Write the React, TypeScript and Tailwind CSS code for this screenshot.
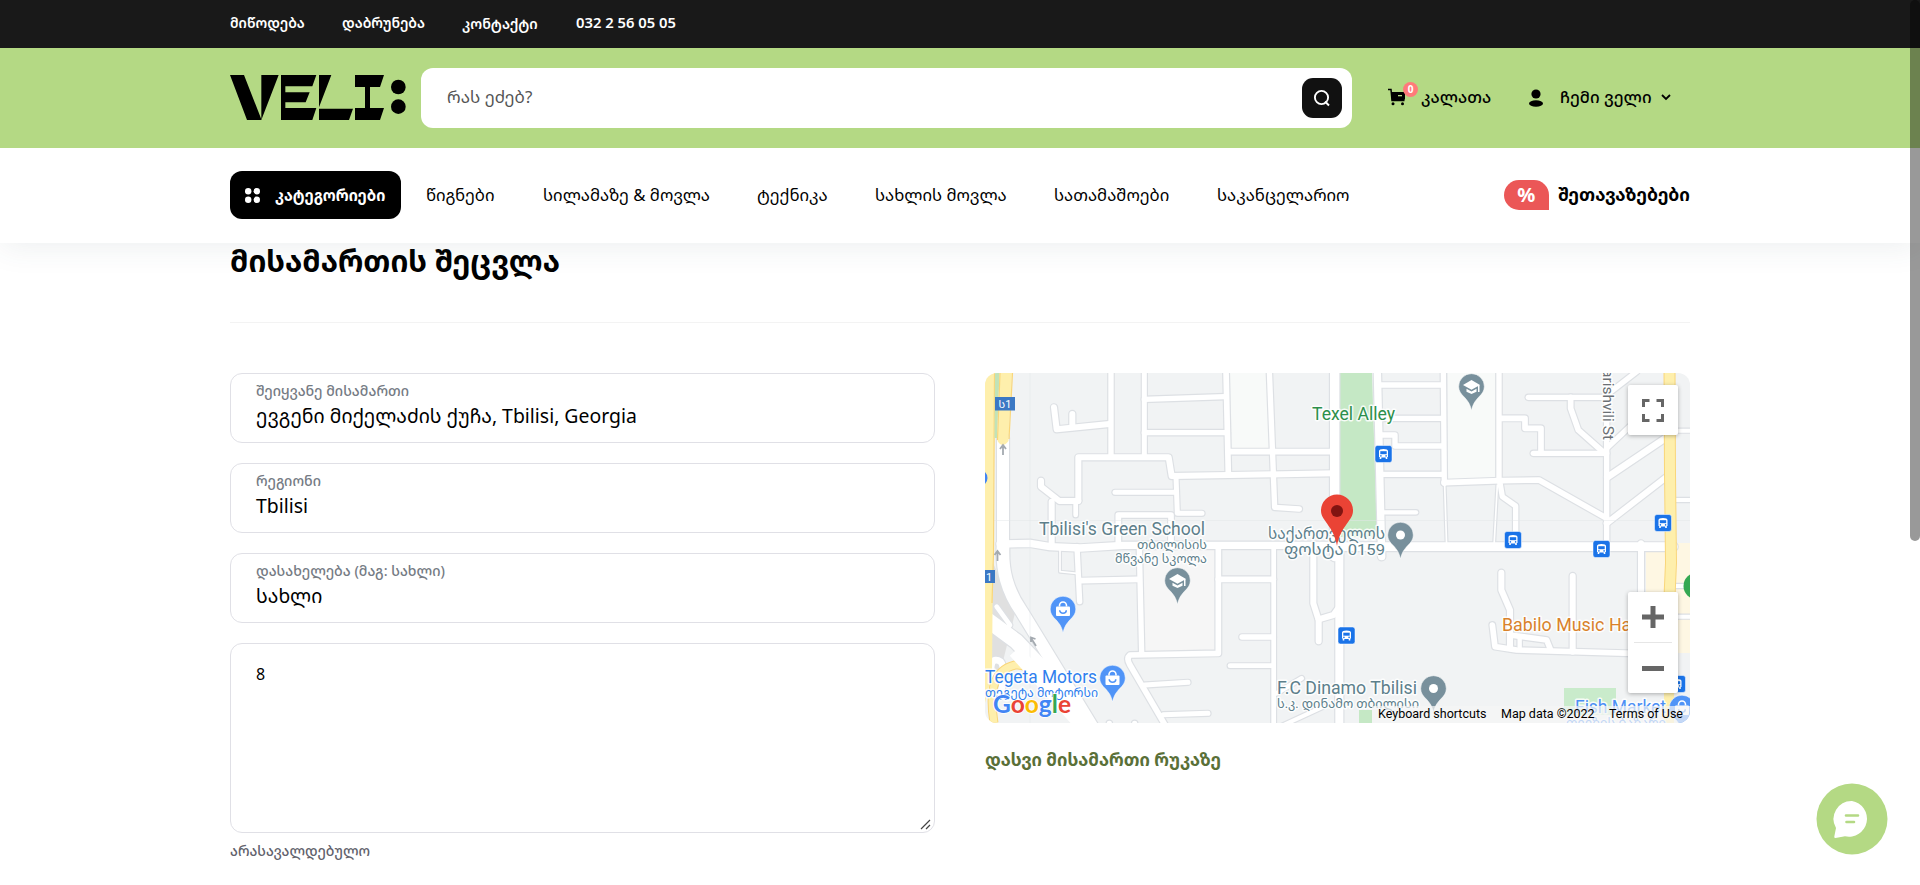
import React from "react";

type Road = [d: string, width: number];
type Quad = { t: string; roads: Road[] };

const QUADS: Quad[] = [
  {
    t: "translate(-5 -3) scale(.33333)",
    roads: [
      ["M69 205V560", 36],
      ["M222 112L230 178L388 162", 18],
      ["M277 132V172", 18],
      ["M393 0V258", 16],
      ["M493 0V258", 15],
      ["M493 88L735 80", 16],
      ["M493 188H742", 16],
      ["M738 0L745 312", 17],
      ["M868 0L884 412L958 417", 16],
      ["M745 245H1064", 17],
      ["M295 392V262H566L575 318L1064 310", 18],
      ["M405 367H588", 15],
      ["M588 320L592 430H666", 15],
      ["M183 332V350L238 393H295", 18],
      ["M215 395V525", 18],
      ["M287 395V435", 14],
      ["M415 520V435H573V520", 17],
      ["M60 522L150 520L210 530L300 534L430 526H1080", 22],
      ["M1064 0V560", 28],
    ],
  },
  {
    t: "translate(355 -3) scale(.33333)",
    roads: [
      ["M112 0L125 560", 22],
      ["M120 45H308", 16],
      ["M122 145H308", 16],
      ["M122 195H165V228H308", 16],
      ["M122 313H308", 16],
      ["M130 427H228", 13],
      ["M310 0L313 340", 16],
      ["M312 338L480 332L597 330L800 445", 17],
      ["M477 0V334", 16],
      ["M480 145H555V175H603V245", 17],
      ["M580 250H800", 16],
      ["M565 82H800", 16],
      ["M692 82V115L715 180L785 242", 17],
      ["M800 0V535", 16],
      ["M800 75L890 5", 16],
      ["M800 235L890 150", 16],
      ["M802 322L978 203", 20],
      ["M800 460L978 322", 18],
      ["M480 338L487 380L527 408V520", 16],
      ["M314 345L320 530", 5],
      ["M472 345L462 530", 5],
      ["M990 182H1060", 12],
      ["M990 390H1060", 12],
      ["M-20 530H1000", 26],
    ],
  },
  {
    t: "translate(-5 177) scale(.33333)",
    roads: [
      ["M69 -10C66 60 80 120 125 185L345 545", 38],
      ["M22 210L110 275L200 370L330 540", 46],
      ["M50 170L90 225L70 250", 14],
      ["M45 400C20 340 40 320 62 335C75 350 70 400 60 440", 20],
      ["M291 -10L299 155", 16],
      ["M240 0V65L290 70", 5],
      ["M300 92L475 88", 17],
      ["M478 -10L485 308", 16],
      ["M715 -10V310L450 315Q438 325 450 345L558 530", 17],
      ["M715 88H880", 17],
      ["M881 -10V540", 14],
      ["M786 261H880", 16],
      ["M750 347H880", 14],
      ["M495 405L624 397", 15],
      ["M550 494L684 490", 15],
      ["M1000 -10V160L1016 210V274", 18],
      ["M1016 208L1060 195L1078 170", 18],
      ["M1078 -10V540", 24],
      ["M965 385L890 430", 14],
      ["M1030 470L900 530", 12],
      ["M388 520V560M464 520V560", 16],
    ],
  },
  {
    t: "translate(355 177) scale(.33333)",
    roads: [
      ["M903 -20V310", 18],
      ["M484 68V120L510 180V295", 18],
      ["M457 225L465 290L530 300L910 311", 17],
      ["M510 255L620 270L632 300", 17],
      ["M539 258V298", 13],
      ["M698 78V305", 18],
      ["M990 108H1060", 12],
      ["M990 200H1060", 12],
    ],
  },
];

function Pin({ x, y, color, kind }: { x: number; y: number; color: string; kind: "dot" | "school" | "bag" }) {
  return (
    <g transform={`translate(${x} ${y})`}>
      <path
        d="M0 24C-1.5 17-3.8 14.5-7 10.8C-10.5 7.500-12.800 4.500-12.800 0A12.800 12.800 0 0 1 12.800 0C12.800 4.500 10.500 7.500 7 10.800C3.800 14.500 1.500 17 0 24Z"
        fill={color}
        stroke="#ffffff"
        strokeOpacity=".5"
        strokeWidth="1"
      />
      {kind === "dot" && <circle r="4.5" fill="#fff" />}
      {kind === "school" && (
        <g fill="#fff">
          <path d="M-8.500-1.500L0-6.500L8.500-1.500L0 3.200Z" />
          <path d="M-5 2.200L0 5L5 2.200V5.200L0 7.500L-5 5.200Z" />
          <rect x="6.500" y="-1.500" width="1.500" height="7" />
        </g>
      )}
      {kind === "bag" && (
        <g>
          <rect x="-7" y="-2.500" width="14" height="9.500" rx="1" fill="#fff" />
          <path d="M-3.500-2.500V-3.500a3.500 3.500 0 0 1 7 0V-2.500" fill="none" stroke="#fff" strokeWidth="1.600" />
          <path d="M-3.300 1.200a3.300 3 0 0 0 6.600 0" fill="none" stroke={color} strokeWidth="1.500" />
        </g>
      )}
    </g>
  );
}

function Bus({ x, y }: { x: number; y: number }) {
  return (
    <g transform={`translate(${x} ${y})`}>
      <rect x="-8.500" y="-8.500" width="17" height="17" rx="2.500" fill="#1a73e8" stroke="#fff" strokeOpacity=".5" />
      <path d="M-4.500 3V-3Q-4.500-5 0-5Q4.500-5 4.500-3V3H3.800V5H2.200V3.500H-2.200V5H-3.800V3Z" fill="#fff" />
      <rect x="-3.200" y="-2.800" width="6.400" height="3" fill="#1a73e8" />
      <circle cx="-2.600" cy="1.900" r=".8" fill="#1a73e8" />
      <circle cx="2.600" cy="1.900" r=".8" fill="#1a73e8" />
    </g>
  );
}

function Label({
  x,
  y,
  len,
  size = 17.5,
  fill = "#5d7f8b",
  anchor = "start",
  children,
}: {
  x: number;
  y: number;
  len?: number;
  size?: number;
  fill?: string;
  anchor?: "start" | "end" | "middle";
  children: React.ReactNode;
}) {
  return (
    <text
      x={x}
      y={y}
      fontSize={size}
      fill={fill}
      textAnchor={anchor}
      textLength={len}
      lengthAdjust="spacingAndGlyphs"
      stroke="#fff"
      strokeOpacity=".85"
      strokeWidth="3"
      strokeLinejoin="round"
      paintOrder="stroke"
      fontFamily='Roboto, "Noto Sans Georgian", sans-serif'
    >
      {children}
    </text>
  );
}

function MapDrawing() {
  return (
    <svg width="705" height="350" viewBox="0 0 705 350" className="block">
      <rect width="705" height="350" fill="#f1f3f4" />
      <path d="M245 0H283L287 76H247Z" fill="#f8faf9" />
      <path d="M463 0H510V108L463 108Z" fill="#f8faf9" />
      <path d="M158 175H232V278H160Z" fill="#f6f6f6" />
      <path d="M355 0H387L392 164H355Z" fill="#c5e8c5" />
      <path d="M661 170H705V280H661Z" fill="#fef7e3" />
      <path d="M8 190L30 240L15 300L0 290V190Z" fill="#e0e0e0" />
      <path d="M579 315H631V342H579Z" fill="#c9ebcb" />
      <path d="M374 337H387V350H374Z" fill="#c5e8c5" />
      {QUADS.map((q) => (
        <g key={q.t} transform={q.t} fill="none" stroke="#dde0e4" strokeLinecap="round" strokeLinejoin="round">
          {q.roads.map(([d, w]) => (
            <path key={d} d={d} strokeWidth={w + 7} />
          ))}
        </g>
      ))}
      {QUADS.map((q) => (
        <g key={q.t} transform={q.t} fill="none" stroke="#fff" strokeLinecap="round" strokeLinejoin="round">
          {q.roads.map(([d, w]) => (
            <path key={d} d={d} strokeWidth={w} />
          ))}
        </g>
      ))}
      <g stroke="#e3e6e8" strokeWidth=".5">
        <path d="M45 0V350M0 147.500H705" />
      </g>
      <path d="M0 0H10L8 180L7 300L0 330Z" fill="#feefac" />
      <path d="M9.500 0L8.500 180L7 230" stroke="#f9d67a" strokeWidth="1.200" fill="none" />
      <path d="M10 0H14.500L12 65H9.500Z" fill="#c1e3b8" />
      <path d="M15 0H27L23.500 68Q17.500 76 12.500 68Z" fill="#feefac" />
      <path d="M15 0L12.500 67M27.500 0L24 66" stroke="#f9d67a" strokeWidth="1.200" fill="none" />
      <path d="M9 350C5 325 5 298 30 292Q42 291 48 300" stroke="#f9d67a" strokeWidth="9" fill="none" />
      <path d="M9 350C5 325 5 298 30 292Q42 291 48 300" stroke="#feefac" strokeWidth="7" fill="none" />
      <path d="M30 278L95 350" stroke="#fff" strokeWidth="14" fill="none" />
      <path d="M684.500 -5L685 100L686 190L684 235" stroke="#f9d67a" strokeWidth="12" fill="none" />
      <path d="M684.500 -5L685 100L686 190L684 235" stroke="#feefac" strokeWidth="10" fill="none" />
      <path d="M684 316V350" stroke="#feefac" strokeWidth="10" fill="none" />
      <g stroke="#a4aab0" strokeWidth="1.800" fill="none">
        <path d="M18 82V73M15 76L18 72L21 76" />
        <path d="M12.500 188V179M9.500 182L12.500 178L15.500 182" />
        <path d="M51 273L46 265M46 269V264.500L50.500 266" />
      </g>
      <rect x="10" y="24" width="20" height="13.500" fill="#3b78c4" />
      <text x="20" y="35" fontSize="11" fill="#fff" textAnchor="middle" fontFamily='Roboto, "Noto Sans Georgian", sans-serif'>
        ს1
      </text>
      <rect x="-10" y="197" width="20" height="13" fill="#3b78c4" />
      <text x="1" y="208" fontSize="11" fill="#fff" fontFamily="Roboto, sans-serif">
        1
      </text>
      <circle cx="-6" cy="105" r="8.500" fill="#4285f4" />
      <circle cx="712" cy="213" r="13.500" fill="#34a853" />
      <Bus x={398.5} y={81} />
      <Bus x={528} y={167} />
      <Bus x={616.5} y={176} />
      <Bus x={678} y={150} />
      <Bus x={361.5} y={262.5} />
      <Bus x={692} y={311} />
      <Pin x={486.5} y={13.5} color="#78909c" kind="school" />
      <Pin x={415.5} y={162} color="#78909c" kind="dot" />
      <Pin x={192.5} y={207.5} color="#78909c" kind="school" />
      <Pin x={78} y={236} color="#5094f7" kind="bag" />
      <Pin x={127.5} y={305} color="#5094f7" kind="bag" />
      <Pin x={448.5} y={315.5} color="#78909c" kind="dot" />
      <Pin x={697} y={335} color="#5094f7" kind="bag" />
      <Label x={327} y={47} len={83} fill="#2c8f4b">Texel Alley</Label>
      <Label x={54} y={162} len={166}>Tbilisi's Green School</Label>
      <Label x={222} y={176} size={12.5} len={70} anchor="end">თბილისის</Label>
      <Label x={222} y={190} size={12.5} len={92} anchor="end">მწვანე სკოლა</Label>
      <Label x={283} y={166} size={15.5} len={117}>საქართველოს</Label>
      <Label x={299} y={182} size={15.5} len={101}>ფოსტა 0159</Label>
      <Label x={0} y={310} len={112} fill="#2f80ee">Tegeta Motors</Label>
      <Label x={0} y={324} size={12.5} len={113} fill="#2f80ee">თეგეტა მოტორსი</Label>
      <Label x={292} y={321} len={140}>F.C Dinamo Tbilisi</Label>
      <Label x={292} y={335} size={12.5} len={142}>ს.კ. დინამო თბილისი</Label>
      <Label x={517} y={258} len={138} fill="#d9822b">Babilo Music Hall</Label>
      <Label x={590} y={340} len={91} fill="#4b8ff5">Fish Market</Label>
      <Label x={581} y={354} size={12.5} len={100} fill="#4b8ff5">თევზის ბაზარი</Label>
      <g transform="translate(618 -14) rotate(90)">
        <Label x={10} y={0} size={15} len={71} fill="#6b7075">arishvili St</Label>
      </g>
      <path
        d="M352 173C350.500 163 346.500 157 342 150.500C338 145 336 142 336 137.500A16 16 0 0 1 368 137.500C368 142 366 145 362 150.500C357.500 157 353.500 163 352 173Z"
        fill="#ea4335"
      />
      <circle cx="352" cy="138" r="6" fill="#811411" />
      <text
        x="8"
        y="340"
        fontSize="25"
        fontWeight="700"
        textLength="78"
        lengthAdjust="spacingAndGlyphs"
        fontFamily="Lato, sans-serif"
        stroke="#fff"
        strokeWidth="1.500"
        paintOrder="stroke"
      >
        <tspan fill="#4285f4">G</tspan>
        <tspan fill="#ea4335">o</tspan>
        <tspan fill="#fbbc04">o</tspan>
        <tspan fill="#4285f4">g</tspan>
        <tspan fill="#34a853">l</tspan>
        <tspan fill="#ea4335">e</tspan>
      </text>
    </svg>
  );
}

function Logo() {
  return (
    <svg width="176" height="45" viewBox="30 225 528 135" className="mb-px shrink-0">
      <path d="M30 225H72L124 358V225H176L124 360H81Z" />
      <path d="M183 225H289L277 259H196V277H269L257 307H196V324H289L277 360H183Z" />
      <path d="M297 225H334L297 322ZM297 326H399L387 360H297Z" />
      <path d="M405 225H492L480 261H450V324H492L480 360H405V324H435V261H405Z" />
      <circle cx="535" cy="261" r="22" />
      <circle cx="535" cy="320" r="22" />
    </svg>
  );
}

function Field({ label, children }: { label: string; children: React.ReactNode }) {
  return (
    <div className="flex h-[70px] flex-col rounded-xl border border-[#e0e0e6] px-[25px] pt-[7px]">
      <span className="text-[14.2px] leading-[20px] font-medium whitespace-nowrap text-[#757b84]">{label}</span>
      <span className="text-[19.4px] leading-[30px] whitespace-nowrap text-black">{children}</span>
    </div>
  );
}

export default function App() {
  return (
    <div className="relative h-[885px] w-full overflow-hidden bg-white font-['Noto_Sans','Noto_Sans_Georgian',sans-serif] text-black">
      <header className="relative z-10 bg-white shadow-[0_4px_30px_rgba(60,75,90,0.09)]">
        <div className="h-12 bg-[#191919]">
          <div className="mx-auto flex h-[45px] w-[1460px] items-center text-[14px] font-semibold whitespace-nowrap text-white">
            <span className="w-[112px]">მიწოდება</span>
            <span className="w-[120px]">დაბრუნება</span>
            <span className="w-[114px] pt-[2px] text-[14.2px]">კონტაქტი</span>
            <span className="text-[14.8px]">032 2 56 05 05</span>
          </div>
        </div>
        <div className="h-[100px] bg-[#b4d984]">
          <div className="mx-auto flex h-full w-[1460px] items-center whitespace-nowrap">
            <Logo />
            <div className="ml-[15px] flex h-[60px] w-[931px] items-center justify-between rounded-xl bg-white pr-[10px] pl-[26px]">
              <span className="mb-[2px] text-[17px] text-[#555]">რას ეძებ?</span>
              <span className="flex h-10 w-10 items-center justify-center rounded-[11px] bg-[#111]">
                <svg width="18" height="18" viewBox="0 0 18 18" fill="none" stroke="#fff" strokeWidth="1.900">
                  <circle cx="8.500" cy="8.500" r="6.600" />
                  <path d="M12 12.500L16 16.500" />
                </svg>
              </span>
            </div>
            <div className="relative mb-[2px] ml-[36px] flex w-[33px] items-center">
              <svg width="18" height="18" viewBox="0 0 18 18">
                <path d="M0 1.500H3L4 12.500H16.500" fill="none" stroke="#000" strokeWidth="1.500" />
                <path d="M3 4H17V10.500Q17 12.500 15 12.500H4Z" />
                <rect x="10" y="7" width="4" height="1.300" fill="#b4d984" />
                <circle cx="5" cy="15.700" r="1.500" />
                <circle cx="14.500" cy="15.700" r="1.500" />
              </svg>
              <span className="absolute -top-[6px] left-[15px] flex h-[15px] w-[15px] items-center justify-center rounded-full bg-[#ff7a7a] text-[10px] font-bold text-white">
                0
              </span>
            </div>
            <span className="mb-[2px] w-[108px] text-[16.5px] font-medium">კალათა</span>
            <svg width="14" height="18" viewBox="0 0 14 18" className="mr-[17px] mb-px">
              <circle cx="7" cy="5" r="4.600" />
              <ellipse cx="7" cy="14.500" rx="7" ry="3.200" />
            </svg>
            <span className="mb-[2px] w-[101px] text-[16.6px] font-medium">ჩემი ველი</span>
            <svg width="10" height="7" viewBox="0 0 10 7" fill="none" stroke="#000" strokeWidth="1.800" className="mb-[2px]">
              <path d="M1 1L5 5L9 1" />
            </svg>
          </div>
        </div>
        <div className="mx-auto flex h-[95px] w-[1460px] items-center pb-px whitespace-nowrap">
          <div className="mr-[25px] flex h-12 w-[171px] items-center rounded-xl bg-black pl-[15px] text-[15.1px] font-bold text-white">
            <svg width="15" height="15" viewBox="0 0 15 15" fill="#fff" className="mr-[15px]">
              <circle cx="3.200" cy="3.200" r="3.200" />
              <circle cx="11.800" cy="3.200" r="3.200" />
              <circle cx="3.200" cy="11.800" r="3.200" />
              <circle cx="11.800" cy="11.800" r="3.200" />
            </svg>
            <span>კატეგორიები</span>
          </div>
          <nav className="flex w-[1078px] items-center text-[16.7px]">
            <span className="w-[117px]">წიგნები</span>
            <span className="w-[214px]">სილამაზე &amp; მოვლა</span>
            <span className="w-[118px]">ტექნიკა</span>
            <span className="w-[179px]">სახლის მოვლა</span>
            <span className="w-[163px]">სათამაშოები</span>
            <span>საკანცელარიო</span>
          </nav>
          <span className="mr-[9px] flex h-[30px] w-[45px] items-center justify-center rounded-[15px] rounded-br-none bg-[#eb5757] text-[20px] font-bold text-white">
            %
          </span>
          <span className="mb-[2px] text-[17.6px] font-bold">შეთავაზებები</span>
        </div>
      </header>

      <main className="mx-auto w-[1460px]">
        <h1 className="flex h-[80px] items-start border-b border-[#f3f3f3] text-[29.6px] leading-[36px] font-bold whitespace-nowrap">
          მისამართის შეცვლა
        </h1>
        <div className="mt-[50px] grid grid-cols-2 gap-[50px]">
          <div className="flex flex-col gap-5">
            <Field label="შეიყვანე მისამართი">ევგენი მიქელაძის ქუჩა, Tbilisi, Georgia</Field>
            <Field label="რეგიონი">Tbilisi</Field>
            <Field label="დასახელება (მაგ: სახლი)">სახლი</Field>
            <div className="flex flex-col gap-[7px]">
              <div className="flex h-[190px] items-start justify-between rounded-xl border border-[#e0e0e6] pt-[18px] pr-[3px] pl-[25px] text-[16px] leading-6">
                <span>8</span>
                <svg width="11" height="11" viewBox="0 0 11 11" stroke="#444" strokeWidth="1.200" className="mb-[2px] self-end">
                  <path d="M1 10L10 1M6 10L10 6" />
                </svg>
              </div>
              <span className="text-[14.1px] leading-[22px] font-medium text-[#62626c]">არასავალდებულო</span>
            </div>
          </div>
          <div>
            <div className="relative h-[350px] w-[705px] overflow-hidden rounded-xl">
              <MapDrawing />
              <div className="absolute top-[12px] right-[12px] flex h-[50px] w-[50px] items-center justify-center rounded-[2px] bg-white shadow-[0_1px_4px_rgba(0,0,0,0.3)]">
                <svg width="22" height="23" viewBox="0 0 22 23" fill="none" stroke="#666" strokeWidth="3">
                  <path d="M1.500 8V1.500H7.500M14.500 1.500H20.500V8M20.500 15V21.500H14.500M7.500 21.500H1.500V15" />
                </svg>
              </div>
              <div className="absolute right-[12px] bottom-[30px] flex h-[101px] w-[50px] flex-col items-center rounded-[2px] bg-white shadow-[0_1px_4px_rgba(0,0,0,0.3)]">
                <span className="flex h-[51px] w-[38px] items-center justify-center border-b border-[#e6e6e6]">
                  <svg width="22" height="22" viewBox="0 0 22 22" stroke="#666" strokeWidth="5">
                    <path d="M0 11H22M11 0V22" />
                  </svg>
                </span>
                <span className="flex h-[50px] items-center">
                  <svg width="22" height="5" viewBox="0 0 22 5">
                    <rect width="22" height="5" fill="#666" />
                  </svg>
                </span>
              </div>
              <div className="absolute right-0 bottom-0 flex h-[17px] items-center justify-between bg-[#f5f5f5]/70 pr-[7px] pl-[6px] font-[Roboto] text-[12.5px] whitespace-nowrap text-black">
                <span className="w-[123px]">Keyboard shortcuts</span>
                <span className="w-[108px]">Map data ©2022</span>
                <span className="w-[74px]">Terms of Use</span>
              </div>
            </div>
            <p className="mt-[24px] text-[17.2px] leading-[26px] font-bold text-[#5a7038]">დასვი მისამართი რუკაზე</p>
          </div>
        </div>
      </main>

      <svg width="72" height="72" viewBox="0 0 72 72" className="absolute top-[783px] left-[1815.5px]">
        <circle cx="36" cy="36" r="35.500" fill="#b4d984" />
        <path d="M36 18A18 18 0 1 1 29 53.300L19.500 55Q18 55 18.300 53.500L20 45A18 18 0 0 1 36 18Z" fill="#fff" />
        <path d="M30 32.500H42M30.500 39H38" stroke="#b4d984" strokeWidth="2.600" strokeLinecap="round" />
      </svg>
      <div className="absolute top-0 right-0 z-20 h-[541px] w-[10px] rounded-full bg-black/40" />
    </div>
  );
}
